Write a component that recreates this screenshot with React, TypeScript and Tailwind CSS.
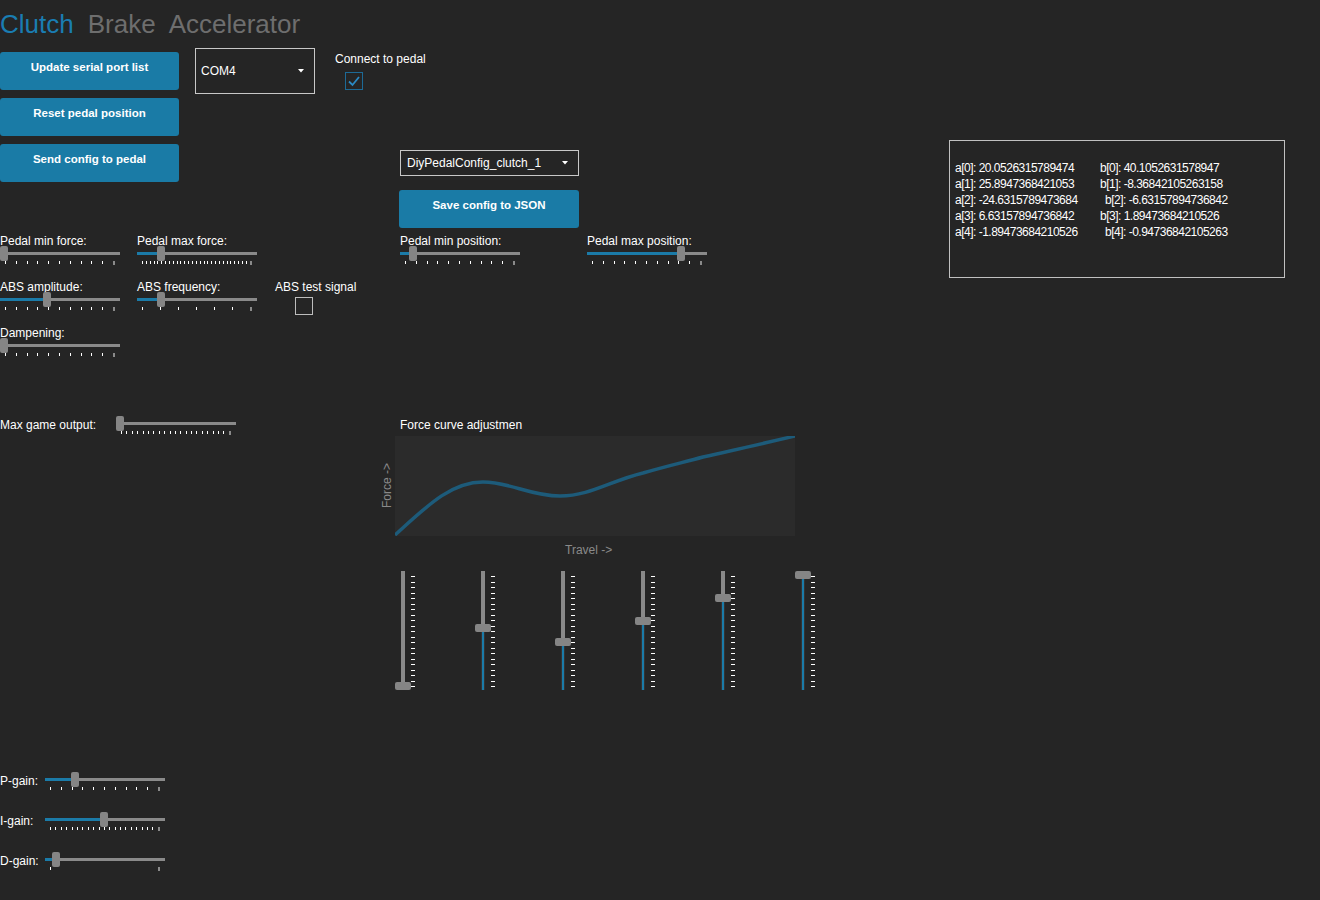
import React from 'react';

// fontes: Liberation Sans tem largura parecida com o Segoe UI do original
const font = "font-['Liberation_Sans',Arial,sans-serif]";

function Ticks({ count, width = 120 }: { count: number; width?: number }) {
  return (
    <div className="flex justify-between items-start px-[5px] h-[4px]" style={{ width }}>
      {Array.from({ length: count }).map((_, i) =>
        i === count - 1 ? (
          <div key={i} className="w-[2px] h-[4px] bg-[#8a8a8a]" />
        ) : (
          <div key={i} className="w-px h-[3px] bg-white" />
        )
      )}
    </div>
  );
}

function HSlider({ value, ticks, width = 120 }: { value: number; ticks: number; width?: number }) {
  const left = Math.round(value * (width - 8));
  return (
    <div style={{ width }}>
      <div className="relative h-[15px]">
        <div className="absolute left-0 right-0 top-[6px] h-[3px] bg-[#8a8a8a]" />
        <div className="absolute left-0 top-[6px] h-[3px] bg-[#1b7ba8]" style={{ width: left }} />
        <div className="absolute top-0 h-[15px] w-[8px] rounded-[2px] bg-[#858585]" style={{ left }} />
      </div>
      <Ticks count={ticks} width={width} />
    </div>
  );
}

function LabeledSlider({ label, value, ticks }: { label: string; value: number; ticks: number }) {
  return (
    <div className="w-[120px]">
      <div className="h-[13px] leading-[16px] text-[12px] text-white whitespace-nowrap">{label}</div>
      <HSlider value={value} ticks={ticks} />
    </div>
  );
}

function VSlider({ value }: { value: number }) {
  const top = Math.round((1 - value) * 111);
  const fill = 119 - top - 8;
  return (
    <div className="flex">
      <div className="relative w-[16px] h-[119px]">
        <div className="absolute left-[6px] top-0 bottom-0 w-[4px] bg-[#8a8a8a]" />
        <div className="absolute left-[6px] bottom-0 w-[4px] bg-[#1b7ba8] border-x border-[#333]" style={{ height: fill }} />
        <div className="absolute left-0 h-[8px] w-[16px] rounded-[2px] bg-[#858585]" style={{ top }} />
      </div>
      <div className="flex flex-col justify-between pt-[5px] pb-[3px] h-[119px]">
        {Array.from({ length: 21 }).map((_, i) => (
          <div key={i} className="w-[4px] h-px bg-white" />
        ))}
      </div>
    </div>
  );
}

function BlueButton({ children, w = 179 }: { children: React.ReactNode; w?: number }) {
  return (
    <div
      className="h-[38px] rounded-[3px] bg-[#1a7ba6] text-white text-[11.5px] font-bold text-center pt-[7px] leading-[16px]"
      style={{ width: w }}
    >
      {children}
    </div>
  );
}

function Arrow() {
  return (
    <svg width="6" height="4" viewBox="0 0 6 4">
      <path d="M0 0 H6 L3 3.5 Z" fill="#fff" />
    </svg>
  );
}

const coefs = [
  ['a[0]: 20.0526315789474', 'b[0]: 40.1052631578947', 0],
  ['a[1]: 25.8947368421053', 'b[1]: -8.36842105263158', 0],
  ['a[2]: -24.6315789473684', 'b[2]: -6.63157894736842', 5],
  ['a[3]: 6.63157894736842', 'b[3]: 1.89473684210526', 0],
  ['a[4]: -1.89473684210526', 'b[4]: -0.94736842105263', 5],
] as const;

export default function App() {
  return (
    <div className={`w-[1320px] h-[900px] bg-[#252525] flex ${font}`}>
      <div className="w-[949px] flex flex-col">
        {/* abas */}
        <div className="h-[48px] pt-[4px] text-[26px] leading-[40px] whitespace-nowrap">
          <span className="text-[#1a7db2]">Clutch</span>
          <span className="text-[#6e6e6e] ml-[14px]">Brake</span>
          <span className="text-[#6e6e6e] ml-[13px]">Accelerator</span>
        </div>

        {/* botoes e conexao */}
        <div className="flex h-[180px]">
          <div className="flex flex-col gap-[8px] mt-[4px]">
            <BlueButton>Update serial port list</BlueButton>
            <BlueButton>Reset pedal position</BlueButton>
            <BlueButton>Send config to pedal</BlueButton>
          </div>
          <div className="ml-[16px] w-[120px] h-[46px] border border-[#c8c8c8] flex items-center justify-between pl-[5px] pr-[10px]">
            <span className="text-white text-[12px]">COM4</span>
            <Arrow />
          </div>
          <div className="ml-[20px] flex flex-col">
            <div className="mt-[3px] leading-[16px] text-[12px] text-white">Connect to pedal</div>
            <div className="ml-[10px] mt-[5px] w-[18px] h-[18px] border border-[#1d6a96] flex items-center justify-center">
              <svg width="14" height="14" viewBox="0 0 14 14">
                <path d="M2 7.5 L5.5 11 L12 3" stroke="#2b8ac4" strokeWidth="1.8" fill="none" />
              </svg>
            </div>
            <div className="ml-[65px] mt-[60px] w-[179px] h-[26px] border border-[#c8c8c8] flex items-center justify-between pl-[6px] pr-[10px]">
              <span className="text-white text-[12px]">DiyPedalConfig_clutch_1</span>
              <Arrow />
            </div>
            <div className="ml-[64px] mt-[14px]">
              <BlueButton w={180}>Save config to JSON</BlueButton>
            </div>
          </div>
        </div>

        {/* sliders */}
        <div className="flex mt-[5px] h-[32px]">
          <LabeledSlider label="Pedal min force:" value={0} ticks={11} />
          <div className="ml-[17px]">
            <LabeledSlider label="Pedal max force:" value={0.18} ticks={29} />
          </div>
          <div className="ml-[143px]">
            <LabeledSlider label="Pedal min position:" value={0.08} ticks={11} />
          </div>
          <div className="ml-[67px]">
            <LabeledSlider label="Pedal max position:" value={0.8} ticks={11} />
          </div>
        </div>
        <div className="flex mt-[14px] h-[32px]">
          <LabeledSlider label="ABS amplitude:" value={0.38} ticks={11} />
          <div className="ml-[17px]">
            <LabeledSlider label="ABS frequency:" value={0.18} ticks={7} />
          </div>
          <div className="ml-[18px]">
            <div className="leading-[16px] text-[12px] text-white">ABS test signal</div>
            <div className="ml-[20px] mt-[2px] w-[18px] h-[18px] shrink-0 border border-[#bdbdbd]" />
          </div>
        </div>
        <div className="flex mt-[14px] h-[32px]">
          <LabeledSlider label="Dampening:" value={0} ticks={11} />
        </div>

        {/* saida e curva */}
        <div className="flex mt-[60px]">
          <div className="w-[378px] flex">
            <div className="leading-[16px] text-[12px] text-white w-[116px]">Max game output:</div>
            <div className="-mt-[1px]">
              <HSlider value={0} ticks={21} />
            </div>
          </div>
          <div className="flex flex-col">
            <div className="h-[19px] pl-[22px] leading-[16px] text-[12px] text-white">Force curve adjustmen</div>
            <div className="flex">
              <div className="w-[17px] flex items-center justify-center">
                <span className="[writing-mode:vertical-rl] rotate-180 text-[12px] leading-[14px] text-[#8a8a8a]">Force -&gt;</span>
              </div>
              <div className="w-[400px] h-[100px] bg-[#2b2b2b]">
                <svg width="400" height="100" viewBox="0 0 400 100">
                  <path
                    d="M0 99 C30 72 55 46 88 46 C115 46 135 60 165 60 C195 60 215 45 248 37 C272 30 290 26 308 21 C340 14 370 7 400 0"
                    stroke="#1d5b7a"
                    strokeWidth="3.5"
                    fill="none"
                  />
                </svg>
              </div>
            </div>
            <div className="pl-[187px] h-[22px] pt-[6px] leading-[16px] text-[12px] text-[#8a8a8a]">Travel -&gt;</div>
            <div className="flex gap-[60px] pl-[17px] mt-[13px]">
              <VSlider value={0} />
              <VSlider value={0.52} />
              <VSlider value={0.4} />
              <VSlider value={0.59} />
              <VSlider value={0.79} />
              <VSlider value={1} />
            </div>
          </div>
        </div>

        {/* ganhos PID */}
        <div className="flex flex-col gap-[21px] mt-[82px]">
          {[
            ['P-gain:', 0.23, 11],
            ['I-gain:', 0.49, 21],
            ['D-gain:', 0.06, 2],
          ].map(([label, v, t]) => (
            <div key={label as string} className="flex">
              <div className="w-[45px] h-[15px] leading-[18px] text-[12px] text-white">{label}</div>
              <HSlider value={v as number} ticks={t as number} />
            </div>
          ))}
        </div>
      </div>

      {/* coeficientes */}
      <div className="mt-[140px] w-[336px] h-[138px] border border-[#c0c0c0] pt-[19px] pl-[5px] self-start">
        {coefs.map(([a, b, off]) => (
          <div key={a} className="flex leading-[16px] text-[12px] tracking-[-0.5px] text-white whitespace-nowrap">
            <span className="w-[145px]">{a}</span>
            <span style={{ marginLeft: off }}>{b}</span>
          </div>
        ))}
      </div>
    </div>
  );
}
